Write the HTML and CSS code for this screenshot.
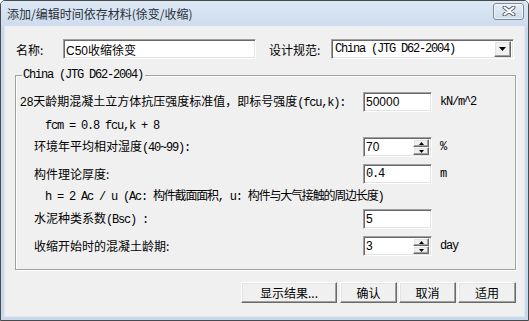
FILE: index.html
```html
<!DOCTYPE html>
<html lang="zh-CN">
<head>
    <meta charset="UTF-8">
    <title>添加/编辑时间依存材料(徐变/收缩)</title>
    <link rel="stylesheet" href="styles.css">
</head>
<body>
    <div class="window">
        <div class="titlebar">
            <span class="title">添加/编辑时间依存材料(徐变/收缩)</span>
            <span class="close-btn">
                <svg width="14" height="10" viewBox="0 0 14 10">
                    <path d="M2.5 1.5 L11.5 8.5 M11.5 1.5 L2.5 8.5" stroke="#5a6577" stroke-width="4" stroke-linecap="round"/>
                    <path d="M2.5 1.5 L11.5 8.5 M11.5 1.5 L2.5 8.5" stroke="#fff" stroke-width="2" stroke-linecap="round"/>
                </svg>
            </span>
        </div>

        <div class="client">
            <div class="top-row">
                <label class="name-label">名称:</label>
                <input class="field name-field" type="text" value="C50收缩徐变">
                <label class="code-label">设计规范:</label>
                <div class="field select">
                    <span class="select-text mono">China (JTG D62-2004)</span>
                    <span class="raised drop-btn">
                        <svg width="7" height="4" viewBox="0 0 7 4"><path d="M0 0 H7 L3.5 4 Z" fill="#000"/></svg>
                    </span>
                </div>
            </div>

            <div class="group">
                <span class="legend mono">China (JTG D62-2004)</span>

                <div class="row row-first">
                    <span class="label first">28天龄期混凝土立方体抗压强度标准值，即标号强度<span class="mono">(fcu,k):</span></span>
                    <input class="field value" type="text" value="50000">
                    <span class="unit mono">kN/m^2</span>
                </div>

                <div class="row formula-row">
                    <span class="label formula mono">fcm = 0.8 fcu,k + 8</span>
                </div>

                <div class="row row-humid">
                    <span class="label">环境年平均相对湿度<span class="mono">(40~99):</span></span>
                    <div class="field spin-field">
                        <input class="spin-input" type="text" value="70">
                        <div class="spin">
                            <span class="raised spin-btn"><svg width="5" height="3" viewBox="0 0 5 3"><path d="M0 3 H5 L2.5 0 Z" fill="#000"/></svg></span>
                            <span class="raised spin-btn"><svg width="5" height="3" viewBox="0 0 5 3"><path d="M0 0 H5 L2.5 3 Z" fill="#000"/></svg></span>
                        </div>
                    </div>
                    <span class="unit mono">%</span>
                </div>

                <div class="row row-thick">
                    <span class="label">构件理论厚度:</span>
                    <input class="field value mono-value" type="text" value="0.4">
                    <span class="unit mono">m</span>
                </div>

                <div class="row formula-row formula-h">
                    <span class="label formula mono">h = 2 Ac / u (Ac: 构件截面面积, u: 构件与大气接触的周边长度)</span>
                </div>

                <div class="row row-bsc">
                    <span class="label">水泥种类系数<span class="mono">(Bsc) :</span></span>
                    <input class="field value" type="text" value="5">
                </div>

                <div class="row row-age">
                    <span class="label">收缩开始时的混凝土龄期:</span>
                    <div class="field spin-field">
                        <input class="spin-input" type="text" value="3">
                        <div class="spin">
                            <span class="raised spin-btn"><svg width="5" height="3" viewBox="0 0 5 3"><path d="M0 3 H5 L2.5 0 Z" fill="#000"/></svg></span>
                            <span class="raised spin-btn"><svg width="5" height="3" viewBox="0 0 5 3"><path d="M0 0 H5 L2.5 3 Z" fill="#000"/></svg></span>
                        </div>
                    </div>
                    <span class="unit mono">day</span>
                </div>
            </div>

            <div class="buttons">
                <button class="raised btn btn-wide">显示结果...</button>
                <button class="raised btn">确认</button>
                <button class="raised btn">取消</button>
                <button class="raised btn btn-last">适用</button>
            </div>
        </div>
    </div>
</body>
</html>
```

FILE: styles.css
```css
* {
    box-sizing: border-box;
}
body {
    margin: 0;
    font-family: "Liberation Sans", "Noto Sans CJK SC", sans-serif;
    font-size: 12px;
    color: #000;
    background: #fff;
}
.window {
    width: 529px;
    height: 321px;
    border: 1px solid #4a4a4a;
    border-radius: 5px 5px 0 0;
    background: #c9d9ec;
    display: flex;
    flex-direction: column;
    overflow: hidden;
}
.titlebar {
    height: 25px;
    flex: none;
    display: flex;
    align-items: center;
    justify-content: space-between;
    padding: 0 4px 0 6px;
    background: linear-gradient(#dde8f5, #cddcee);
}
.title {
    font-family: "Noto Sans CJK SC", sans-serif;
    font-size: 12px;
    line-height: 16px;
    color: #2a2f36;
    margin-top: 1px;
}
.close-btn {
    width: 31px;
    height: 17px;
    margin-top: -5px;
    border: 1px solid #7d8a9c;
    border-radius: 3px;
    background: linear-gradient(#e6edf6, #cfdbea);
    box-shadow: inset 0 0 0 1px rgba(255, 255, 255, 0.6);
    display: flex;
    align-items: center;
    justify-content: center;
}
.client {
    flex: 1;
    margin: 0 3px 3px 3px;
    background: #f0f0f0;
    border: 1px solid #dfe7f1;
    border-top: none;
}

.mono {
    font-family: "Liberation Mono", "Noto Sans CJK SC", monospace;
    font-size: 12px;
    letter-spacing: -1.2px;
}

/* sunken edit boxes */
.field {
    height: 20px;
    border: 1px solid;
    border-color: #a0a0a0 #fff #fff #a0a0a0;
    box-shadow: inset 1px 1px 0 #696969, inset -1px -1px 0 #e3e3e3;
    background: #fff;
    font-family: "Liberation Sans", "Noto Sans CJK SC", sans-serif;
    font-size: 12px;
    color: #000;
    padding: 0 2px;
    margin: 0;
    outline: none;
}
.raised {
    border: 1px solid;
    border-color: #fff #696969 #696969 #fff;
    box-shadow: inset -1px -1px 0 #a0a0a0, inset 1px 1px 0 #e3e3e3;
    background: #f0f0f0;
}

.top-row {
    display: flex;
    align-items: center;
    height: 20px;
    margin-top: 13px;
    padding-left: 11px;
}
.name-label {
    width: 47px;
    font-family: "Noto Sans CJK SC", sans-serif;
}
.name-field {
    width: 193px;
}
.code-label {
    width: 62px;
    margin-left: 13px;
    font-family: "Noto Sans CJK SC", sans-serif;
}
.select {
    width: 183px;
    display: flex;
    align-items: center;
    justify-content: space-between;
    padding: 0 2px 0 3px;
}
.select-text {
    line-height: 14px;
}
.drop-btn {
    width: 17px;
    height: 16px;
    display: flex;
    align-items: center;
    justify-content: center;
}

.group {
    position: relative;
    margin: 16px 0 0 10px;
    width: 501px;
    border: 1px solid #a0a0a0;
    box-shadow: 1px 1px 0 #fff, inset 1px 1px 0 #fff;
    padding: 16px 0 13px 0;
}
.legend {
    position: absolute;
    top: -8px;
    left: 6px;
    padding: 0 2px 0 1px;
    background: #f0f0f0;
    line-height: 14px;
}
.row {
    display: grid;
    grid-template-columns: 347px 69px auto;
    align-items: center;
    height: 20px;
}
.label {
    padding-left: 18px;
    white-space: nowrap;
    font-family: "Noto Sans CJK SC", sans-serif;
    line-height: 16px;
}
.label.first {
    padding-left: 4px;
    font-family: "Liberation Sans", "Noto Sans CJK SC", sans-serif;
}
.label.formula {
    padding-left: 29px;
    font-family: "Liberation Mono", "Noto Sans CJK SC", monospace;
    font-size: 12px;
    letter-spacing: -1.2px;
}
.formula-row {
    height: 18px;
    margin-top: 5px;
}
.formula-h {
    margin-top: 4px;
}
.row-humid {
    margin-top: 2px;
}
.row-thick {
    margin-top: 7px;
}
.row-bsc {
    margin-top: 3px;
}
.row-age {
    margin-top: 7px;
}
.value {
    width: 69px;
}
.mono-value {
    font-family: "Liberation Mono", monospace;
    font-size: 12px;
    letter-spacing: -1.2px;
}
.unit {
    margin-left: 8px;
    white-space: nowrap;
}
.spin-field {
    width: 69px;
    display: flex;
    align-items: center;
    padding: 2px 2px 2px 2px;
}
.spin-input {
    flex: 1;
    min-width: 0;
    border: none;
    outline: none;
    background: transparent;
    font-family: "Liberation Sans", sans-serif;
    font-size: 12px;
    padding: 0;
}
.spin {
    width: 16px;
    height: 16px;
    display: flex;
    flex-direction: column;
}
.spin-btn {
    height: 8px;
    display: flex;
    align-items: center;
    justify-content: center;
}

.buttons {
    display: flex;
    justify-content: flex-end;
    gap: 2px;
    margin-top: 12px;
    padding-right: 8px;
}
.btn {
    width: 57px;
    height: 21px;
    padding: 0;
    font-family: "Noto Sans CJK SC", sans-serif;
    font-size: 12px;
    color: #000;
}
.btn-wide {
    width: 96px;
    margin-right: 1px;
}
.btn-last {
    width: 58px;
}
```
